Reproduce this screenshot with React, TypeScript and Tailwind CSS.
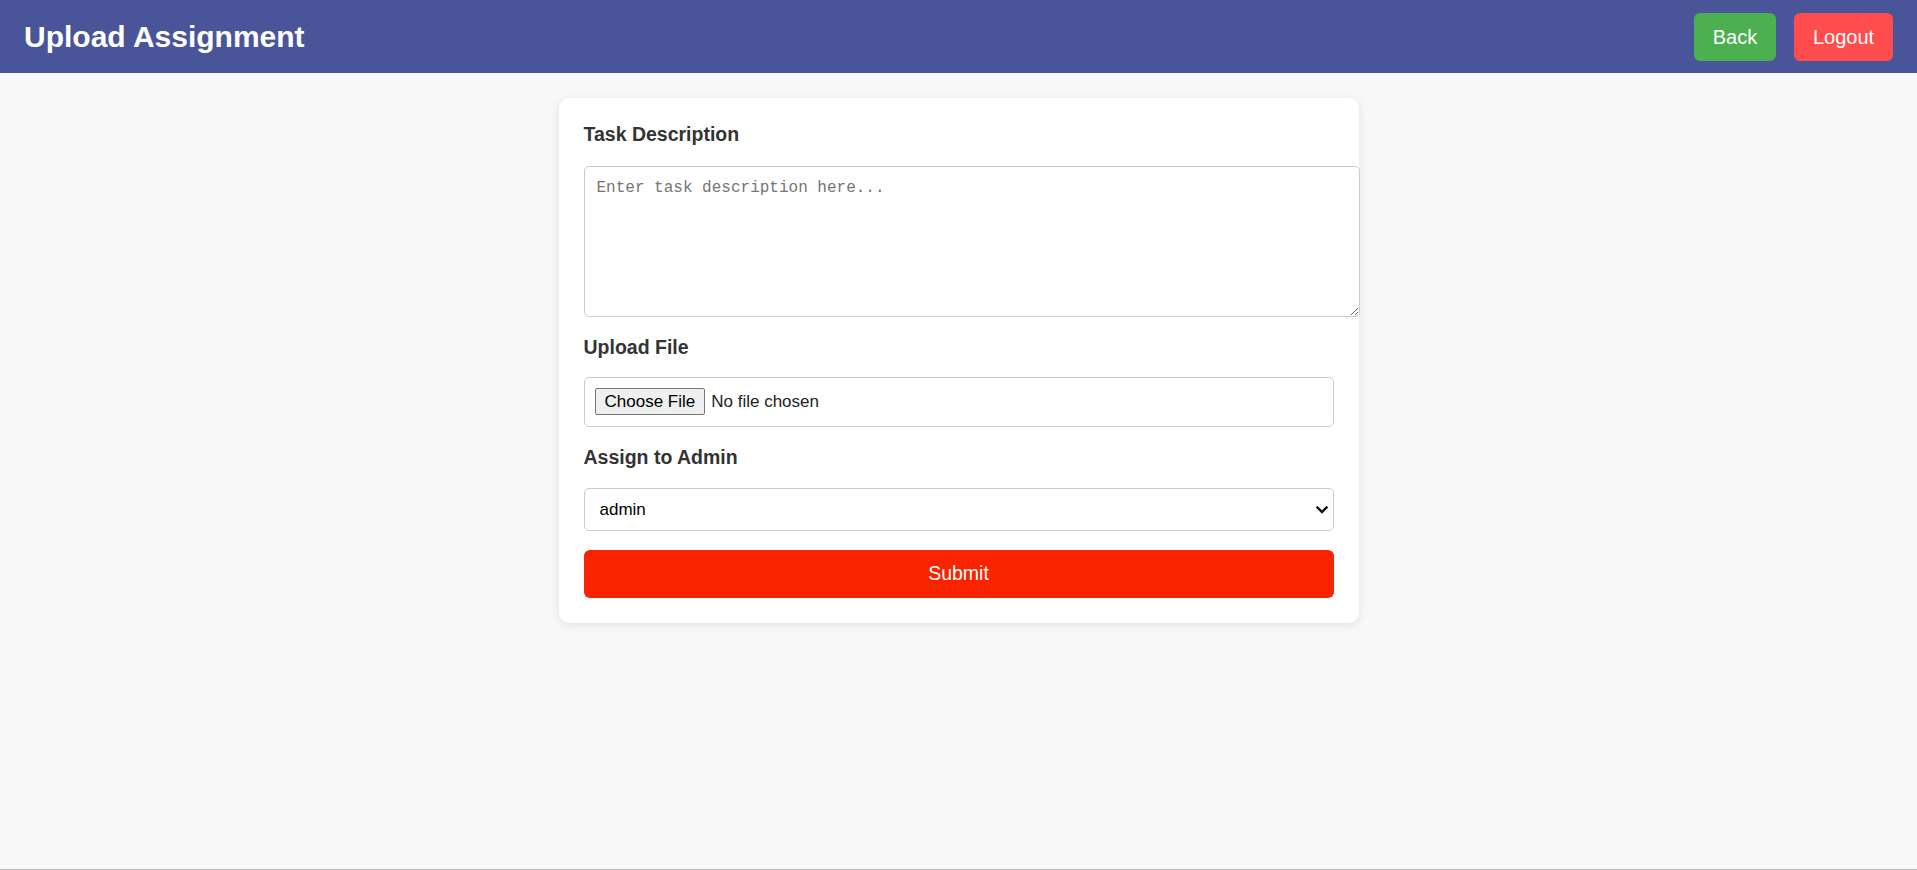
import React from "react";

const sans = "font-['Liberation_Sans',Arial,sans-serif]";

function FieldLabel({ children, className = "" }: { children: React.ReactNode; className?: string }) {
  return (
    <label className={`block text-[19.5px] font-bold leading-[22px] text-[#333] ${className}`}>
      {children}
    </label>
  );
}

export default function App() {
  return (
    <div className={`h-[870px] bg-[#f8f8f8] border-b border-[#bdbdbd] box-border ${sans}`}>
      <header className="h-[73px] bg-[#4a5499] flex items-center justify-between pl-[24px] pr-[24px]">
        <h1 className="text-[30px] font-bold text-white">Upload Assignment</h1>
        <div className="flex items-center gap-[18px]">
          <button className="h-[48px] w-[82px] rounded-[6px] bg-[#4caf50] text-white text-[20px]">Back</button>
          <button className="h-[48px] w-[99px] rounded-[6px] bg-[#ff4d4d] text-white text-[20px]">Logout</button>
        </div>
      </header>

      <main className="flex justify-center pt-[25px]">
        <form
          className="w-[800px] bg-white rounded-[10px] shadow-[0_2px_10px_rgba(0,0,0,0.1)] px-[25px] pt-[25px] pb-[25px]"
          onSubmit={(e) => e.preventDefault()}
        >
          <FieldLabel>Task Description</FieldLabel>
          <textarea
            placeholder="Enter task description here..."
            className="block mt-[21px] w-[776px] h-[151px] box-border border border-[#ccc] rounded-[5px] p-[12px] text-[16px] leading-[19px] font-['Liberation_Mono',monospace] placeholder:text-[#757575] outline-none"
          />

          <FieldLabel className="mt-[19px]">Upload File</FieldLabel>
          <input
            type="file"
            className="block mt-[19px] w-full h-[50px] box-border border border-[#ccc] rounded-[5px] px-[10px] py-[10px] text-[17px] text-[#222] file:mr-[6px] file:h-[27px] file:px-[9px] file:border file:border-solid file:border-[#767676] file:bg-[#efefef] file:rounded-[2px] file:text-[17px] file:text-black"
          />

          <FieldLabel className="mt-[19px]">Assign to Admin</FieldLabel>
          <div className="relative mt-[20px]">
            <select className="block w-full h-[43px] box-border appearance-none border border-[#ccc] rounded-[5px] pl-[15px] pr-[30px] text-[17px] text-black bg-white">
              <option>admin</option>
            </select>
            <svg
              className="pointer-events-none absolute right-[6px] top-[18px]"
              width="12"
              height="8"
              viewBox="0 0 12 8"
              fill="none"
            >
              <path d="M1.5 1.5 L6 6 L10.5 1.5" stroke="#111" strokeWidth="2.4" strokeLinecap="square" />
            </svg>
          </div>

          <button
            type="submit"
            className="block mt-[19px] w-full h-[48px] rounded-[6px] bg-[#fa2300] text-white text-[19.5px]"
          >
            Submit
          </button>
        </form>
      </main>
    </div>
  );
}
